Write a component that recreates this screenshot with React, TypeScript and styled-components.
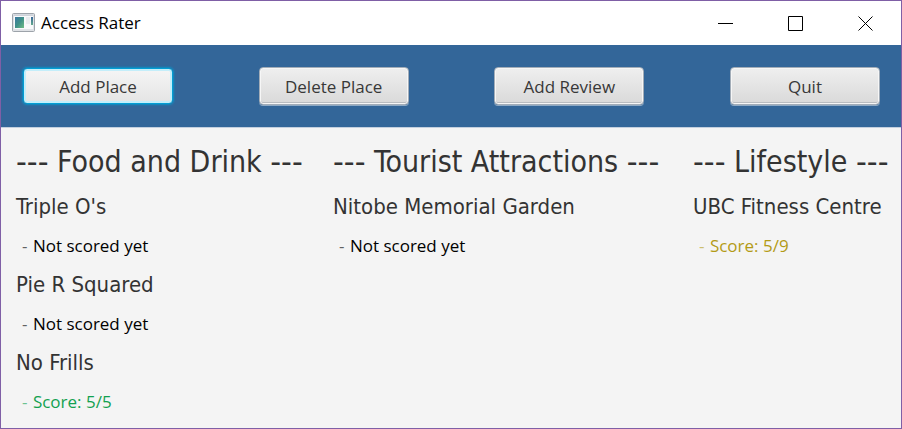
import React from "react";
import styled, { createGlobalStyle } from "styled-components";

const GlobalStyle = createGlobalStyle`
  *, *::before, *::after { box-sizing: border-box; }
  body { margin: 0; background: #f4f4f4; }
`;

const uiFont = `"Segoe UI", "Open Sans", "Noto Sans", sans-serif`;
const headingFont = `Tahoma, "DejaVu Sans Condensed", "Noto Sans", sans-serif`;

const Window = styled.div`
  display: flex;
  flex-direction: column;
  min-height: 100vh;
  border: 1px solid #7f5fa6;
  background: #f4f4f4;
  font-family: ${uiFont};
`;

const TitleBar = styled.header`
  display: flex;
  align-items: center;
  height: 44px;
  padding: 0 1px 0 11px;
  background: #ffffff;
`;

const AppTitle = styled.h1`
  flex: 1;
  margin: 0 0 0 5px;
  font-size: 17px;
  line-height: 24px;
  font-weight: 400;
  color: #000000;
`;

const WindowButton = styled.button`
  display: flex;
  align-items: center;
  justify-content: center;
  width: 70px;
  height: 44px;
  padding: 0;
  border: 0;
  background: transparent;
`;

const Toolbar = styled.nav`
  display: flex;
  justify-content: space-between;
  align-items: center;
  height: 83px;
  padding: 0 21px 0 22px;
  background: #336699;
  border-bottom: 1px solid #c3cfde;
`;

const ActionButton = styled.button<{ $focused?: boolean }>`
  width: 150px;
  height: ${(p) => (p.$focused ? 36 : 38)}px;
  padding: 1px 0 0;
  border: 1px solid ${(p) => (p.$focused ? "#039ed3" : "#a3adb8")};
  border-radius: 4px;
  background: ${(p) =>
    p.$focused
      ? "linear-gradient(#f5f5f5, #e4e4e4)"
      : "linear-gradient(#efefef, #d9d9d9)"};
  box-shadow: ${(p) =>
    p.$focused
      ? "inset 0 0 0 2px #c4eefa, 0 0 2px 1px #0c8fc6"
      : "inset 0 0 0 1px #f6f6f6, inset 0 -2px 0 #b9bcc0, 0 1px 0 #8ea9c4"};
  font-family: ${uiFont};
  font-size: 17px;
  line-height: 24px;
  color: #383838;
  outline: none;
`;

const Columns = styled.main`
  display: grid;
  grid-template-columns: 317fr 360fr 208fr;
  flex: 1;
  padding: 14px 0 0 15px;
`;

const Column = styled.section`
  min-width: 0;
  white-space: nowrap;
`;

const CategoryName = styled.h2`
  margin: 0 0 6px;
  font-family: ${headingFont};
  font-size: 30px;
  line-height: 40px;
  font-weight: 400;
  color: #333333;
`;

const Rule = styled.span`
  font-family: Tahoma, "DejaVu Sans", sans-serif;
`;

const PlaceList = styled.ul`
  margin: 0;
  padding: 0;
  list-style: none;
`;

const Place = styled.li`
  height: 78px;
`;

const PlaceName = styled.h3`
  margin: 0;
  font-family: ${headingFont};
  font-size: 22px;
  line-height: 38px;
  font-weight: 400;
  color: #333333;
`;

const tones = { none: "#000000", good: "#12a150", fair: "#b39b16" };
type Tone = keyof typeof tones;

const Score = styled.p<{ $tone: Tone }>`
  margin: 0;
  padding-left: 6px;
  font-size: 17px;
  line-height: 40px;
  color: ${(p) => tones[p.$tone]};
`;

const Dash = styled.span`
  margin-right: 1px;
  opacity: 0.6;
`;

const AppIcon = () => (
  <svg width="24" height="20" viewBox="0 0 24 20" aria-hidden="true">
    <defs>
      <linearGradient id="pane" x1="0" y1="0" x2="1" y2="1">
        <stop offset="0" stopColor="#3b78a2" />
        <stop offset="0.5" stopColor="#3f9088" />
        <stop offset="1" stopColor="#6fbd84" />
      </linearGradient>
      <linearGradient id="strip" x1="0" y1="0" x2="0" y2="1">
        <stop offset="0" stopColor="#38679a" />
        <stop offset="1" stopColor="#63a98c" />
      </linearGradient>
    </defs>
    <rect x="0.5" y="0.5" width="22" height="18" rx="1" fill="#dfe2e6" stroke="#9da3aa" />
    <rect x="1.5" y="1.5" width="20" height="2" fill="#cdd2d9" />
    <rect x="2" y="3" width="19" height="13" fill="#f8f9fa" />
    <rect x="3" y="4" width="9" height="11" fill="url(#pane)" />
    <rect x="14" y="4" width="4" height="7" fill="#e9ecef" />
    <rect x="19" y="4" width="2" height="8" fill="url(#strip)" />
  </svg>
);

const controls = [
  { label: "Minimize", path: "M0 7.5H15" },
  { label: "Maximize", path: "M0.5 0.5H14.5V14.5H0.5Z" },
  { label: "Close", path: "M0.5 0.5L14.5 14.5M14.5 0.5L0.5 14.5" },
];

const actions = ["Add Place", "Delete Place", "Add Review", "Quit"];

const categories: {
  name: string;
  places: { name: string; score: string; tone: Tone }[];
}[] = [
  {
    name: "Food and Drink",
    places: [
      { name: "Triple O's", score: "Not scored yet", tone: "none" },
      { name: "Pie R Squared", score: "Not scored yet", tone: "none" },
      { name: "No Frills", score: "Score: 5/5", tone: "good" },
    ],
  },
  {
    name: "Tourist Attractions",
    places: [{ name: "Nitobe Memorial Garden", score: "Not scored yet", tone: "none" }],
  },
  {
    name: "Lifestyle",
    places: [{ name: "UBC Fitness Centre", score: "Score: 5/9", tone: "fair" }],
  },
];

export default function App() {
  return (
    <Window>
      <GlobalStyle />
      <TitleBar>
        <AppIcon />
        <AppTitle>Access Rater</AppTitle>
        {controls.map((c) => (
          <WindowButton key={c.label} type="button" aria-label={c.label}>
            <svg width="15" height="15" viewBox="0 0 15 15" fill="none" stroke="#000000">
              <path d={c.path} />
            </svg>
          </WindowButton>
        ))}
      </TitleBar>
      <Toolbar aria-label="Actions">
        {actions.map((label, i) => (
          <ActionButton key={label} type="button" $focused={i === 0}>
            {label}
          </ActionButton>
        ))}
      </Toolbar>
      <Columns>
        {categories.map((category) => (
          <Column key={category.name}>
            <CategoryName>
              <Rule>---</Rule> {category.name} <Rule>---</Rule>
            </CategoryName>
            <PlaceList>
              {category.places.map((place) => (
                <Place key={place.name}>
                  <PlaceName>{place.name}</PlaceName>
                  <Score $tone={place.tone}>
                    <Dash>-</Dash> {place.score}
                  </Score>
                </Place>
              ))}
            </PlaceList>
          </Column>
        ))}
      </Columns>
    </Window>
  );
}
